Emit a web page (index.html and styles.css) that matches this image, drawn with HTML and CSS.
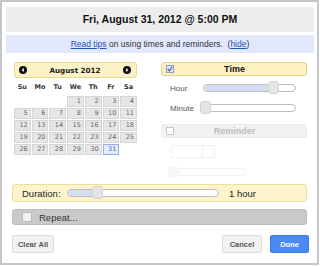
FILE: index.html
```html
<!DOCTYPE html>
<html lang="en">
<head>
    <meta charset="UTF-8">
    <meta name="viewport" content="width=device-width, initial-scale=1.0">
    <title>Event Time</title>
    <link rel="stylesheet" href="styles.css">
</head>
<body>
    <div class="frame">
        <div class="title">Fri, August 31, 2012 @ 5:00 PM</div>
        <div class="tips"><a href="#">Read tips</a> on using times and reminders.&nbsp; (<a href="#">hide</a>)</div>

        <div class="main">
            <div class="calendar">
                <div class="cal-head">
                    <span class="nav"><svg width="8" height="8" viewBox="0 0 8 8"><circle cx="4" cy="4" r="4" fill="#111"/><path d="M4.8 2 L2.6 4 L4.8 6 Z" fill="#fff"/></svg></span>
                    <span class="month">August 2012</span>
                    <span class="nav"><svg width="8" height="8" viewBox="0 0 8 8"><circle cx="4" cy="4" r="4" fill="#111"/><path d="M3.2 2 L5.4 4 L3.2 6 Z" fill="#fff"/></svg></span>
                </div>
                <div class="cal-grid">
                    <span class="dow">Su</span><span class="dow">Mo</span><span class="dow">Tu</span><span class="dow">We</span><span class="dow">Th</span><span class="dow">Fr</span><span class="dow">Sa</span>
                    <span class="empty"></span><span class="empty"></span><span class="empty"></span>
                    <span class="day">1</span><span class="day">2</span><span class="day">3</span><span class="day">4</span>
                    <span class="day">5</span><span class="day">6</span><span class="day">7</span><span class="day">8</span><span class="day">9</span><span class="day">10</span><span class="day">11</span>
                    <span class="day">12</span><span class="day">13</span><span class="day">14</span><span class="day">15</span><span class="day">16</span><span class="day">17</span><span class="day">18</span>
                    <span class="day">19</span><span class="day">20</span><span class="day">21</span><span class="day">22</span><span class="day">23</span><span class="day">24</span><span class="day">25</span>
                    <span class="day">26</span><span class="day">27</span><span class="day">28</span><span class="day">29</span><span class="day">30</span><span class="day selected">31</span>
                </div>
            </div>

            <div class="settings">
                <div class="bar time">
                    <span class="check on"><svg width="6" height="6" viewBox="0 0 6 6"><path d="M0.8 3 L2.5 4.8 L5.2 0.8" fill="none" stroke="#3a55a8" stroke-width="1.1"/></svg></span>
                    <span class="bar-label">Time</span>
                </div>
                <div class="slider-row">
                    <span class="slider-label hour">Hour</span>
                    <div class="track">
                        <div class="fill" style="width: 72%"></div>
                        <span class="handle" style="left: 64px"></span>
                    </div>
                </div>
                <div class="slider-row">
                    <span class="slider-label minute">Minute</span>
                    <div class="track">
                        <span class="handle" style="left: -2px"></span>
                    </div>
                </div>
                <div class="bar reminder">
                    <span class="check"></span>
                    <span class="bar-label">Reminder</span>
                </div>
                <div class="select"><span class="select-arrow"></span></div>
                <div class="track faint">
                    <span class="handle" style="left: -1px"></span>
                </div>
            </div>
        </div>

        <div class="duration">
            <span class="duration-label">Duration:</span>
            <div class="track">
                <div class="fill" style="width: 20%"></div>
                <span class="handle" style="left: 24px"></span>
            </div>
            <span class="duration-value">1 hour</span>
        </div>

        <div class="repeat">
            <span class="check"></span>
            <span>Repeat...</span>
        </div>

        <div class="actions">
            <button class="btn">Clear All</button>
            <span class="spacer"></span>
            <button class="btn">Cancel</button>
            <button class="btn primary">Done</button>
        </div>
    </div>
</body>
</html>
```

FILE: styles.css
```css
body {
    margin: 0;
    background-color: #ffffff;
    font-family: "Liberation Sans", Arial, sans-serif;
    color: #222222;
}

.frame {
    width: 319px;
    height: 265px;
    box-sizing: border-box;
    border: 2px solid #c6c6c6;
    padding: 5px 3px 0 4px;
}

.title {
    height: 25px;
    line-height: 25px;
    background-color: #ededed;
    text-align: center;
    font-size: 10.5px;
    font-weight: bold;
    color: #111111;
}

.tips {
    margin-top: 3px;
    height: 18px;
    line-height: 18px;
    background-color: #e2e8fc;
    text-align: center;
    font-size: 8.5px;
    color: #333333;
}

.tips a {
    color: #2255bb;
}

.main {
    display: flex;
    margin: 9px 0 0 8px;
}

.calendar {
    width: 123px;
}

.cal-head {
    height: 16px;
    box-sizing: border-box;
    border: 1px solid #e9d892;
    border-radius: 3px;
    background-color: #fcf2c6;
    display: flex;
    align-items: center;
    justify-content: space-between;
    padding: 0 5px 0 4px;
}

.nav {
    display: flex;
}

.month {
    font-family: "DejaVu Sans", Verdana, sans-serif;
    font-size: 7.2px;
    font-weight: bold;
    color: #222222;
}

.cal-grid {
    display: grid;
    grid-template-columns: repeat(7, 1fr);
    grid-template-rows: 17px;
    grid-auto-rows: 11px;
    gap: 1px;
    font-family: "DejaVu Sans", Verdana, sans-serif;
    font-size: 6.5px;
}

.dow {
    display: flex;
    align-items: center;
    justify-content: center;
    font-weight: bold;
    color: #333333;
}

.day {
    box-sizing: border-box;
    border: 1px solid #d6d6d6;
    background-color: #e6e6e6;
    color: #666666;
    text-align: right;
    padding-right: 2px;
    line-height: 9px;
}

.day.selected {
    border-color: #92aef0;
    background-color: #e6ecfb;
    color: #5070b8;
}

.settings {
    width: 146px;
    margin-left: 24px;
}

.bar {
    height: 14px;
    box-sizing: border-box;
    border-radius: 3px;
    display: flex;
    align-items: center;
    font-size: 9px;
    font-weight: bold;
}

.bar.time {
    border: 1px solid #e4d28a;
    background-color: #fdf1c0;
    color: #111111;
}

.bar.reminder {
    margin-top: 9px;
    border: 1px solid #ececec;
    background-color: #f1f1f1;
    color: #bdbdbd;
}

.bar-label {
    flex: 1;
    text-align: center;
    margin-right: 11px;
}

.check {
    width: 6px;
    height: 6px;
    margin-left: 4px;
    border: 1px solid #c8c8c8;
    background-color: #ffffff;
    display: flex;
}

.check.on {
    border-color: #8c9cc4;
    background-color: #e2e8f8;
}

.slider-row {
    display: flex;
    align-items: center;
    height: 14px;
    margin-top: 5px;
    padding: 0 11px 0 9px;
}

.slider-row + .slider-row {
    margin-top: 6px;
}

.slider-label {
    font-size: 8px;
    color: #555555;
}

.slider-label.hour {
    width: 33px;
}

.slider-label.minute {
    width: 31px;
}

.track {
    flex: 1;
    height: 8px;
    box-sizing: border-box;
    border: 1px solid #bdbdbd;
    border-radius: 4px;
    background-color: #ffffff;
    position: relative;
}

.fill {
    height: 100%;
    border-radius: 4px 0 0 4px;
    background-color: #d6ddf3;
}

.handle {
    position: absolute;
    top: -4px;
    width: 11px;
    height: 13px;
    box-sizing: border-box;
    border: 1px solid #d4d4d4;
    border-radius: 3px;
    background-color: #e4e4e4;
}

.select {
    width: 44px;
    height: 13px;
    margin: 7px 0 0 10px;
    box-sizing: border-box;
    border: 1px solid #f0f0f0;
    display: flex;
    justify-content: flex-end;
}

.select-arrow {
    width: 11px;
    border-left: 1px solid #f0f0f0;
}

.track.faint {
    flex: none;
    width: 78px;
    margin: 10px 0 0 7px;
    border-color: #f3f3f3;
}

.track.faint .handle {
    border-color: #f3f3f3;
    background-color: #f8f8f8;
    top: -2px;
    height: 10px;
}

.duration {
    margin: 8px 7px 0 6px;
    height: 18px;
    box-sizing: border-box;
    border: 1px solid #eddf9e;
    border-radius: 3px;
    background-color: #fdf4cb;
    display: flex;
    align-items: center;
    padding-left: 9px;
    font-size: 9.5px;
    color: #222222;
}

.duration-label {
    width: 45px;
}

.duration .track {
    flex: none;
    width: 152px;
}

.duration-value {
    margin-left: 10px;
}

.repeat {
    margin: 7px 7px 0 6px;
    height: 16px;
    box-sizing: border-box;
    border: 1px solid #bdbdbd;
    border-radius: 3px;
    background-color: #c9c9c9;
    display: flex;
    align-items: center;
    font-size: 9.5px;
    color: #333333;
}

.repeat .check {
    width: 8px;
    height: 8px;
    margin: 0 7px 0 9px;
    border-color: #bdbdbd;
    background-color: #f2f2f2;
}

.actions {
    display: flex;
    margin: 10px 5px 0 6px;
}

.spacer {
    flex: 1;
}

.btn {
    height: 18px;
    padding: 0;
    border: 1px solid #dddddd;
    border-radius: 2px;
    background-color: #f2f2f2;
    font-family: "Liberation Sans", Arial, sans-serif;
    font-size: 7.5px;
    font-weight: bold;
    color: #555555;
    width: 40px;
}

.btn:first-child {
    width: 42px;
}

.btn.primary {
    width: 39px;
    margin-left: 8px;
    border-color: #3d7de8;
    background-color: #4a8af4;
    color: #ffffff;
}
```
